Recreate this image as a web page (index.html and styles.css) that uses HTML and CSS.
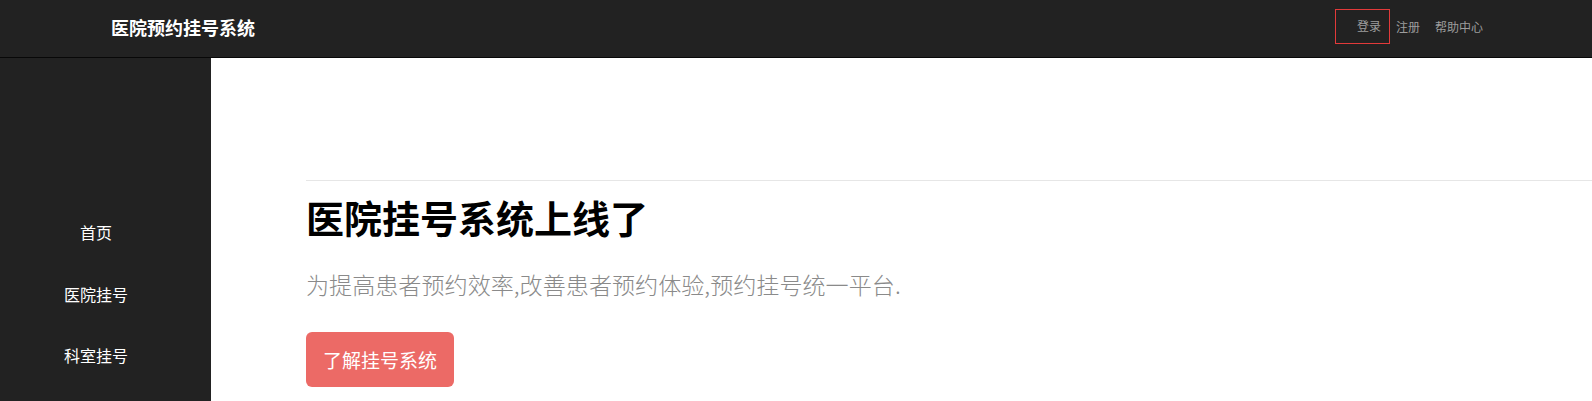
FILE: index.html
```html
<!DOCTYPE html>
<html lang="zh-CN">
<head>
<meta charset="utf-8">
<title>医院预约挂号系统</title>
<link rel="stylesheet" href="styles.css">
</head>
<body>
<header class="topbar">
  <div class="brand">医院预约挂号系统</div>
  <nav class="toplinks">
    <a class="login" href="#">登录</a>
    <a class="reg" href="#">注册</a>
    <a class="help" href="#">帮助中心</a>
  </nav>
</header>
<div class="layout">
  <aside class="sidebar">
    <ul class="sidenav">
      <li>首页</li>
      <li>医院挂号</li>
      <li>科室挂号</li>
    </ul>
  </aside>
  <main class="main">
    <hr class="rule">
    <h1 class="title">医院挂号系统上线了</h1>
    <p class="lead">为提高患者预约效率,改善患者预约体验,预约挂号统一平台.</p>
    <a class="btn" href="#">了解挂号系统</a>
  </main>
</div>
</body>
</html>
```
FILE: styles.css
```css
* { box-sizing: border-box; }
html, body { margin: 0; padding: 0; height: 100%; }
body {
  font-family: "Noto Sans CJK SC", "Noto Sans", sans-serif;
  background: #fff;
  overflow: hidden;
}
a { text-decoration: none; }

.topbar {
  height: 58px;
  background: #222;
  border-bottom: 1px solid #080808;
  display: flex;
  align-items: center;
  justify-content: space-between;
  padding: 0 109px 0 111px;
}
.brand {
  color: #fff;
  font-size: 18px;
  font-weight: bold;
  line-height: 20px;
  margin-top: -3px;
}
.toplinks {
  display: flex;
  align-items: center;
  font-size: 12px;
  margin-top: -4px;
}
.toplinks a { color: #9d9d9d; line-height: 16px; }
.toplinks .login {
  border: 1px solid #e23a3a;
  width: 55px;
  height: 35px;
  padding: 8px 0 0 21px;
}
.toplinks .reg { margin-left: 6px; margin-top: 1px; }
.toplinks .help { margin-left: 15px; margin-top: 1px; }

.layout {
  display: flex;
  height: calc(100% - 58px);
}
.sidebar {
  width: 211px;
  flex: none;
  background: #222;
  padding-top: 144px;
}
.sidenav {
  list-style: none;
  margin: 0;
  padding: 0 19px 0 0;
}
.sidenav li {
  color: #fff;
  font-size: 16px;
  height: 61.5px;
  line-height: 61.5px;
  text-align: center;
}

.main {
  flex: 1;
  padding: 122px 0 0 95px;
}
.rule {
  margin: 0;
  border: 0;
  border-top: 1px solid #e6e6e6;
}
.title {
  margin: 12px 0 0;
  font-size: 38px;
  font-weight: bold;
  line-height: 48px;
  color: #000;
}
.lead {
  margin: 27px 0 0;
  font-size: 23.1px;
  font-weight: 300;
  line-height: 32px;
  color: #8a8a8a;
}
.btn {
  display: inline-flex;
  align-items: center;
  justify-content: center;
  margin-top: 32px;
  width: 148px;
  height: 55px;
  background: #ec6a66;
  color: #fff;
  font-size: 19px;
  border-radius: 6px;
}
```
